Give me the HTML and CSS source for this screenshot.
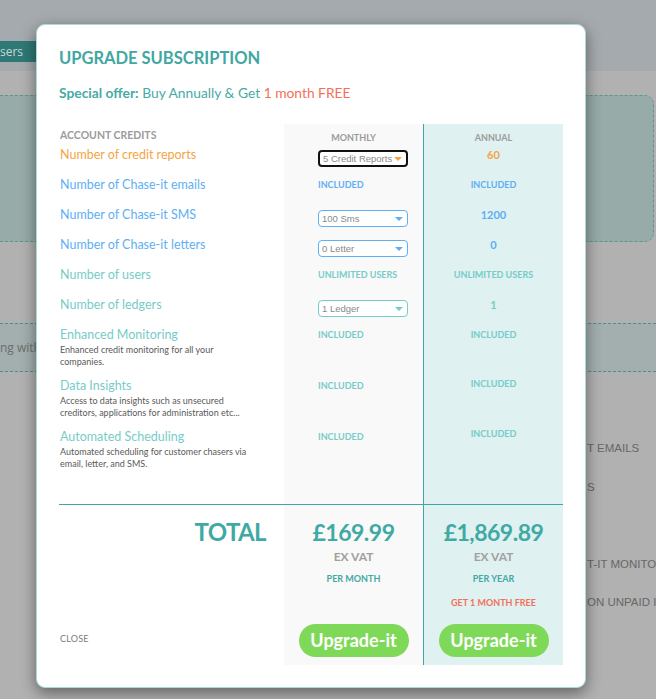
FILE: index.html
```html
<!DOCTYPE html>
<html lang="en">
<head>
<meta charset="utf-8">
<title>Upgrade subscription</title>
<link rel="stylesheet" href="styles.css">
</head>
<body>
<div class="page">
  <div class="topbar"></div>
  <nav class="navrow"><span class="tab">sers</span></nav>
  <section class="panel"></section>
  <section class="band"><span>ng with</span></section>
  <ul class="bg-list">
    <li>T EMAILS</li>
    <li>S</li>
    <li></li>
    <li>T-IT MONITO</li>
    <li>ON UNPAID I</li>
  </ul>
</div>

<div class="modal">
  <h2 class="modal-title">UPGRADE SUBSCRIPTION</h2>
  <p class="offer"><strong>Special offer:</strong> Buy Annually &amp; Get <span class="offer-free">1 month FREE</span></p>

  <div class="plan-grid">
    <div class="cell head-left">ACCOUNT CREDITS</div>
    <div class="cell m head-col">MONTHLY</div>
    <div class="cell a head-col">ANNUAL</div>

    <div class="cell label orange">Number of credit reports</div>
    <div class="cell m"><div class="select select--focus"><span>5 Credit Reports</span><svg class="caret caret--orange" viewBox="0 0 8 4"><path d="M0 0h8L4 4z"/></svg></div></div>
    <div class="cell a"><span class="val orange">60</span></div>

    <div class="cell label blue">Number of Chase-it emails</div>
    <div class="cell m"><span class="tag blue">INCLUDED</span></div>
    <div class="cell a"><span class="tag blue">INCLUDED</span></div>

    <div class="cell label blue">Number of Chase-it SMS</div>
    <div class="cell m"><div class="select select--blue"><span>100 Sms</span><svg class="caret caret--blue" viewBox="0 0 8 4"><path d="M0 0h8L4 4z"/></svg></div></div>
    <div class="cell a"><span class="val blue">1200</span></div>

    <div class="cell label blue">Number of Chase-it letters</div>
    <div class="cell m"><div class="select select--blue"><span>0 Letter</span><svg class="caret caret--blue" viewBox="0 0 8 4"><path d="M0 0h8L4 4z"/></svg></div></div>
    <div class="cell a"><span class="val blue">0</span></div>

    <div class="cell label teal">Number of users</div>
    <div class="cell m"><span class="tag teal">UNLIMITED USERS</span></div>
    <div class="cell a"><span class="tag teal">UNLIMITED USERS</span></div>

    <div class="cell label teal">Number of ledgers</div>
    <div class="cell m"><div class="select select--teal"><span>1 Ledger</span><svg class="caret caret--teal" viewBox="0 0 8 4"><path d="M0 0h8L4 4z"/></svg></div></div>
    <div class="cell a"><span class="val teal">1</span></div>

    <div class="cell feature">
      <div class="feat-title">Enhanced Monitoring</div>
      <div class="feat-desc">Enhanced credit monitoring for all your<br>companies.</div>
    </div>
    <div class="cell m"><span class="tag teal">INCLUDED</span></div>
    <div class="cell a"><span class="tag teal">INCLUDED</span></div>

    <div class="cell feature">
      <div class="feat-title">Data Insights</div>
      <div class="feat-desc">Access to data insights such as unsecured<br>creditors, applications for administration etc...</div>
    </div>
    <div class="cell m"><span class="tag teal">INCLUDED</span></div>
    <div class="cell a"><span class="tag teal tag--up2">INCLUDED</span></div>

    <div class="cell feature">
      <div class="feat-title">Automated Scheduling</div>
      <div class="feat-desc">Automated scheduling for customer chasers via<br>email, letter, and SMS.</div>
    </div>
    <div class="cell m"><span class="tag teal">INCLUDED</span></div>
    <div class="cell a"><span class="tag teal tag--up3">INCLUDED</span></div>

    <div class="cell"></div>
    <div class="cell m"></div>
    <div class="cell a"></div>

    <div class="rule"></div>

    <div class="cell total-left">
      <div class="total">TOTAL</div>
      <div class="close">CLOSE</div>
    </div>
    <div class="cell m price-cell">
      <div class="price">£169.99</div>
      <div class="exvat">EX VAT</div>
      <div class="period">PER MONTH</div>
      <div class="promo"></div>
      <button class="btn" type="button">Upgrade-it</button>
    </div>
    <div class="cell a price-cell">
      <div class="price">£1,869.89</div>
      <div class="exvat">EX VAT</div>
      <div class="period">PER YEAR</div>
      <div class="promo">GET 1 MONTH FREE</div>
      <button class="btn" type="button">Upgrade-it</button>
    </div>
  </div>
</div>
</body>
</html>
```

FILE: styles.css
```css
* { box-sizing: border-box; }

html, body {
  margin: 0;
  padding: 0;
}

body {
  width: 656px;
  height: 699px;
  overflow: hidden;
  background: #b1b1b1;
  font-family: Lato, "Open Sans", sans-serif;
  position: relative;
}

/* ---------- background page (dimmed) ---------- */
.page {
  width: 656px;
  overflow: hidden;
}

.topbar {
  height: 41px;
  background: #a5aaae;
}

.navrow {
  height: 30px;
  background: #a5aaae;
  display: flex;
  align-items: flex-start;
}

.tab {
  width: 36px;
  height: 21px;
  background: #2e7875;
  color: #c6dad8;
  font: 12px/21px "Open Sans", sans-serif;
  overflow: hidden;
}

.panel {
  margin-top: 24px;
  margin-left: -10px;
  margin-right: 2px;
  height: 147px;
  background: #97aba9;
  border: 1px dashed #5f9591;
  border-radius: 0 9px 9px 0;
}

.band {
  margin-top: 81px;
  height: 49px;
  background: #a2afae;
  border-top: 1px dashed #4d8e8a;
  border-bottom: 1px dashed #4d8e8a;
  display: flex;
  align-items: center;
  color: #6d6d6d;
  font: 12px/16px "Open Sans", sans-serif;
  white-space: nowrap;
  overflow: hidden;
}

.bg-list {
  list-style: none;
  margin: 68px 0 0;
  padding: 0 0 0 587px;
  font: 11.5px/16px "Liberation Sans", Arial, sans-serif;
  color: #676767;
  white-space: nowrap;
  overflow: hidden;
}

.bg-list li {
  height: 38.5px;
}

/* ---------- modal ---------- */
.modal {
  position: absolute;
  left: 36px;
  top: 24px;
  width: 550px;
  height: 664px;
  background: #fff;
  border: 1px solid #a6dbd8;
  border-radius: 9px;
  box-shadow: 0 5px 15px rgba(0, 0, 0, 0.45);
  padding: 23px 22px 0;
}

.modal-title {
  margin: 0;
  font: 700 16.5px/20px Lato, sans-serif;
  color: #41a7a2;
}

.offer {
  margin: 16px 0 0;
  font: 400 13.8px/18px Lato, sans-serif;
  color: #47aaa5;
}

.offer strong { font-weight: 700; }

.offer-free { color: #f4705a; }

.plan-grid {
  margin-top: 22px;
  display: grid;
  grid-template-columns: 225px 139px 140px;
  grid-template-rows: 23px repeat(6, 30px) repeat(3, 51px) 24px 1px 160px;
}

.cell { min-width: 0; }

.m { background: #f9f9f9; padding-left: 34px; }

.a {
  background: #dff1f0;
  border-left: 1px solid #3fa6a1;
  text-align: center;
}

.head-left {
  padding: 5px 0 0 1px;
  font: 700 10.5px/12px Lato, sans-serif;
  color: #9b9b9b;
}

.head-col {
  padding: 8px 0 0;
  text-align: center;
  font: 700 9px/12px Lato, sans-serif;
  color: #9b9b9b;
}

.label {
  padding-left: 1px;
  font: 400 12.5px/16px Lato, sans-serif;
}

.orange { color: #f6a443; }
.blue { color: #5eaff4; }
.teal { color: #76ccc8; }

.tag {
  display: block;
  font: 700 9px/16px Lato, sans-serif;
}

.tag--up2 { margin-top: -2px; }
.tag--up3 { margin-top: -3px; }

.val {
  display: block;
  font: 700 11px/16px Lato, sans-serif;
}

.select {
  margin-top: 3px;
  width: 90px;
  height: 17px;
  background: #fff;
  border: 1.5px solid #5eaff4;
  border-radius: 4px;
  display: flex;
  align-items: center;
  justify-content: space-between;
  padding: 0 4px 0 3px;
  font: 9.5px/1 "Liberation Sans", Arial, sans-serif;
  color: #8a8a8a;
  white-space: nowrap;
}

.select--blue { border-color: #5eaff4; }
.select--teal { border-color: #76ccc8; }
.select--focus { border: 2px solid #111; }

.caret { width: 8px; height: 4px; flex: none; }
.caret--orange { fill: #f6a443; }
.caret--blue { fill: #5eaff4; }
.caret--teal { fill: #76ccc8; }

.feature { padding-left: 1px; }

.feat-title {
  font: 400 12.5px/15px Lato, sans-serif;
  color: #76ccc8;
}

.feat-desc {
  margin-top: 1.5px;
  font: 400 9px/12.5px Lato, sans-serif;
  color: #5a5a5a;
  white-space: nowrap;
}

.rule {
  grid-column: 1 / -1;
  background: #3fa6a1;
}

.total-left {
  display: flex;
  flex-direction: column;
  justify-content: space-between;
}

.total {
  align-self: flex-end;
  margin-top: 13px;
  padding-right: 18px;
  font: 700 24px/28px Lato, sans-serif;
  letter-spacing: -0.6px;
  color: #3fa9a4;
}

.close {
  align-self: flex-start;
  padding-left: 1px;
  margin-bottom: 20px;
  font: 400 9px/12px Lato, sans-serif;
  color: #7b7b7b;
  letter-spacing: 0.2px;
}

.price-cell {
  padding: 13px 0 0;
  display: flex;
  flex-direction: column;
  align-items: center;
}

.price {
  font: 700 23px/28px Lato, sans-serif;
  letter-spacing: -0.5px;
  color: #3fa9a4;
}

.exvat {
  margin-top: 3px;
  font: 700 12px/16px Lato, sans-serif;
  color: #a0a0a0;
}

.period {
  margin-top: 8px;
  font: 700 9px/12px Lato, sans-serif;
  color: #3fa9a4;
}

.promo {
  margin-top: 12px;
  min-height: 12px;
  font: 700 9px/12px Lato, sans-serif;
  color: #f4705a;
}

.btn {
  margin-top: 15px;
  width: 110px;
  height: 33px;
  border: none;
  border-radius: 17px;
  background: #7fd958;
  color: #fff;
  font: 700 18px/33px Lato, sans-serif;
  padding: 0;
  cursor: pointer;
}
```
